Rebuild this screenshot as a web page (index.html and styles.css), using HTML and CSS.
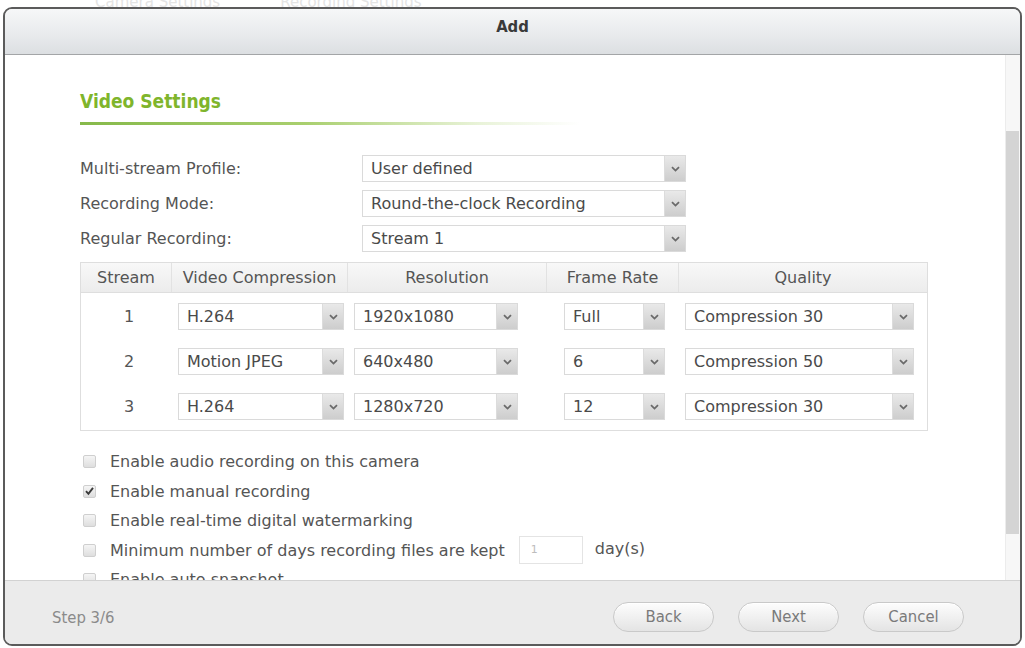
FILE: index.html
```html
<!DOCTYPE html>
<html>
<head>
<meta charset="utf-8">
<title>Add</title>
<link rel="stylesheet" href="styles.css">
</head>
<body>
<div class="page">
  <div class="behind"><span class="behind-a">Camera Settings</span><span class="behind-b">Recording Settings</span></div>
  <div class="dialog">
    <div class="titlebar">Add</div>
    <div class="content">
      <div class="scroll">
        <div class="section-title">Video Settings</div>
        <div class="section-rule"></div>

        <div class="form-rows">
          <div class="form-row">
            <div class="form-label">Multi-stream Profile:</div>
            <div class="select s-wide"><span class="select-text">User defined</span><span class="select-arrow"><svg width="9" height="6" viewBox="0 0 9 6"><path d="M1 1.2 L4.5 4.6 L8 1.2" fill="none" stroke="#6a6a6a" stroke-width="1.8"/></svg></span></div>
          </div>
          <div class="form-row">
            <div class="form-label">Recording Mode:</div>
            <div class="select s-wide"><span class="select-text">Round-the-clock Recording</span><span class="select-arrow"><svg width="9" height="6" viewBox="0 0 9 6"><path d="M1 1.2 L4.5 4.6 L8 1.2" fill="none" stroke="#6a6a6a" stroke-width="1.8"/></svg></span></div>
          </div>
          <div class="form-row">
            <div class="form-label">Regular Recording:</div>
            <div class="select s-wide"><span class="select-text">Stream 1</span><span class="select-arrow"><svg width="9" height="6" viewBox="0 0 9 6"><path d="M1 1.2 L4.5 4.6 L8 1.2" fill="none" stroke="#6a6a6a" stroke-width="1.8"/></svg></span></div>
          </div>
        </div>

        <div class="streams">
          <div class="streams-head">
            <div class="th">Stream</div>
            <div class="th">Video Compression</div>
            <div class="th">Resolution</div>
            <div class="th">Frame Rate</div>
            <div class="th">Quality</div>
          </div>
          <div class="streams-body">
            <div class="srow">
              <div class="td num">1</div>
              <div class="td"><div class="select s-vc"><span class="select-text">H.264</span><span class="select-arrow"><svg width="9" height="6" viewBox="0 0 9 6"><path d="M1 1.2 L4.5 4.6 L8 1.2" fill="none" stroke="#6a6a6a" stroke-width="1.8"/></svg></span></div></div>
              <div class="td"><div class="select s-res"><span class="select-text">1920x1080</span><span class="select-arrow"><svg width="9" height="6" viewBox="0 0 9 6"><path d="M1 1.2 L4.5 4.6 L8 1.2" fill="none" stroke="#6a6a6a" stroke-width="1.8"/></svg></span></div></div>
              <div class="td td-fr"><div class="select s-fr"><span class="select-text">Full</span><span class="select-arrow"><svg width="9" height="6" viewBox="0 0 9 6"><path d="M1 1.2 L4.5 4.6 L8 1.2" fill="none" stroke="#6a6a6a" stroke-width="1.8"/></svg></span></div></div>
              <div class="td"><div class="select s-q"><span class="select-text">Compression 30</span><span class="select-arrow"><svg width="9" height="6" viewBox="0 0 9 6"><path d="M1 1.2 L4.5 4.6 L8 1.2" fill="none" stroke="#6a6a6a" stroke-width="1.8"/></svg></span></div></div>
            </div>
            <div class="srow">
              <div class="td num">2</div>
              <div class="td"><div class="select s-vc"><span class="select-text">Motion JPEG</span><span class="select-arrow"><svg width="9" height="6" viewBox="0 0 9 6"><path d="M1 1.2 L4.5 4.6 L8 1.2" fill="none" stroke="#6a6a6a" stroke-width="1.8"/></svg></span></div></div>
              <div class="td"><div class="select s-res"><span class="select-text">640x480</span><span class="select-arrow"><svg width="9" height="6" viewBox="0 0 9 6"><path d="M1 1.2 L4.5 4.6 L8 1.2" fill="none" stroke="#6a6a6a" stroke-width="1.8"/></svg></span></div></div>
              <div class="td td-fr"><div class="select s-fr"><span class="select-text">6</span><span class="select-arrow"><svg width="9" height="6" viewBox="0 0 9 6"><path d="M1 1.2 L4.5 4.6 L8 1.2" fill="none" stroke="#6a6a6a" stroke-width="1.8"/></svg></span></div></div>
              <div class="td"><div class="select s-q"><span class="select-text">Compression 50</span><span class="select-arrow"><svg width="9" height="6" viewBox="0 0 9 6"><path d="M1 1.2 L4.5 4.6 L8 1.2" fill="none" stroke="#6a6a6a" stroke-width="1.8"/></svg></span></div></div>
            </div>
            <div class="srow">
              <div class="td num">3</div>
              <div class="td"><div class="select s-vc"><span class="select-text">H.264</span><span class="select-arrow"><svg width="9" height="6" viewBox="0 0 9 6"><path d="M1 1.2 L4.5 4.6 L8 1.2" fill="none" stroke="#6a6a6a" stroke-width="1.8"/></svg></span></div></div>
              <div class="td"><div class="select s-res"><span class="select-text">1280x720</span><span class="select-arrow"><svg width="9" height="6" viewBox="0 0 9 6"><path d="M1 1.2 L4.5 4.6 L8 1.2" fill="none" stroke="#6a6a6a" stroke-width="1.8"/></svg></span></div></div>
              <div class="td td-fr"><div class="select s-fr"><span class="select-text">12</span><span class="select-arrow"><svg width="9" height="6" viewBox="0 0 9 6"><path d="M1 1.2 L4.5 4.6 L8 1.2" fill="none" stroke="#6a6a6a" stroke-width="1.8"/></svg></span></div></div>
              <div class="td"><div class="select s-q"><span class="select-text">Compression 30</span><span class="select-arrow"><svg width="9" height="6" viewBox="0 0 9 6"><path d="M1 1.2 L4.5 4.6 L8 1.2" fill="none" stroke="#6a6a6a" stroke-width="1.8"/></svg></span></div></div>
            </div>
          </div>
        </div>

        <div class="options">
          <div class="opt"><span class="cb"></span><span class="opt-label">Enable audio recording on this camera</span></div>
          <div class="opt"><span class="cb cb-checked"><svg width="11" height="10" viewBox="0 0 11 10"><path d="M2 5.2 L4.4 7.8 L9 1.8" fill="none" stroke="#3a3a3a" stroke-width="1.9"/></svg></span><span class="opt-label">Enable manual recording</span></div>
          <div class="opt"><span class="cb"></span><span class="opt-label">Enable real-time digital watermarking</span></div>
          <div class="opt"><span class="cb"></span><span class="opt-label">Minimum number of days recording files are kept</span><span class="days-input">1</span><span class="days-unit">day(s)</span></div>
          <div class="opt"><span class="cb"></span><span class="opt-label">Enable auto snapshot</span></div>
        </div>
      </div>
      <div class="scrollbar"><div class="thumb"></div></div>
    </div>
    <div class="footer">
      <div class="step">Step 3/6</div>
      <div class="buttons">
        <div class="btn">Back</div>
        <div class="btn">Next</div>
        <div class="btn">Cancel</div>
      </div>
    </div>
  </div>
</div>
</body>
</html>
```

FILE: styles.css
```css
* { box-sizing: border-box; }
html, body { margin: 0; padding: 0; background: #ffffff; }
body {
  font-family: "DejaVu Sans", "Liberation Sans", sans-serif;
  font-size: 16px;
  color: #555555;
  width: 1025px;
  height: 648px;
  overflow: hidden;
}
.page {
  padding: 0 3px 0 3px;
}
.behind {
  height: 7px;
  overflow: hidden;
  display: flex;
  gap: 60px;
  padding-left: 92px;
  font-size: 15px;
  line-height: 4px;
  color: #e4e4e4;
}
.dialog {
  width: 1019px;
  height: 639px;
  border: 2px solid #5b5b5b;
  border-radius: 9px;
  overflow: hidden;
  display: flex;
  flex-direction: column;
  background: #fff;
}
.titlebar {
  height: 46px;
  flex: none;
  background: linear-gradient(to bottom, #f6f7f8 0%, #e9ebed 55%, #dcdfe2 100%);
  border-bottom: 1px solid #a3a5a7;
  text-align: center;
  line-height: 36px;
  font-family: "DejaVu Sans Condensed", "DejaVu Sans", sans-serif;
  font-weight: bold;
  font-size: 16.5px;
  color: #3a3a3a;
}
.content {
  flex: 1;
  display: flex;
  min-height: 0;
}
.scroll {
  flex: 1;
  overflow: hidden;
  padding: 35px 0 0 75px;
}
.section-title {
  font-family: "DejaVu Sans Condensed", "DejaVu Sans", sans-serif;
  font-weight: bold;
  font-size: 19px;
  line-height: 22px;
  color: #7fb52c;
}
.section-rule {
  margin-top: 10px;
  width: 500px;
  height: 3px;
  background: linear-gradient(to right, #86b94a 0%, #a9cf6e 45%, rgba(200,225,160,0.4) 80%, rgba(255,255,255,0) 100%);
}
.form-rows {
  margin-top: 30px;
  display: flex;
  flex-direction: column;
  gap: 8px;
}
.form-row {
  display: flex;
  align-items: center;
  height: 27px;
}
.form-label {
  width: 282px;
}
.select {
  height: 27px;
  border: 1px solid #dadada;
  background: #fff;
  display: flex;
  align-items: stretch;
  color: #4a4a4a;
}
.select-text {
  flex: 1;
  padding-left: 8px;
  line-height: 25px;
  white-space: nowrap;
  overflow: hidden;
}
.select-arrow {
  width: 21px;
  flex: none;
  background: linear-gradient(to bottom, #e9e9e9, #cdcdcd);
  border-left: 1px solid #dcdcdc;
  display: flex;
  align-items: center;
  justify-content: center;
}
.s-wide { width: 324px; }
.s-vc { width: 166px; }
.s-res { width: 164px; }
.s-fr { width: 101px; }
.s-q { width: 229px; }

.streams {
  margin-top: 10px;
  width: 848px;
  border: 1px solid #dedede;
}
.streams-head, .srow {
  display: grid;
  grid-template-columns: 90px 176px 199px 132px 249px;
}
.streams-head {
  height: 30px;
  background: linear-gradient(to bottom, #f8f8f8, #ececec);
  border-bottom: 1px solid #dedede;
}
.th {
  text-align: center;
  line-height: 29px;
  color: #555555;
  border-left: 1px solid #e2e2e2;
  white-space: nowrap;
}
.th:first-child { border-left: none; }
.streams-body {
  display: flex;
  flex-direction: column;
  gap: 18px;
  padding: 10px 0 10px 0;
}
.td {
  display: flex;
  align-items: center;
  padding-left: 7px;
  height: 27px;
}
.td.num {
  justify-content: center;
  padding-left: 6px;
}
.td.td-fr { padding-left: 18px; }

.options {
  margin-top: 16px;
  padding-left: 3px;
}
.opt {
  display: flex;
  align-items: center;
  height: 29.5px;
}
.cb {
  width: 13px;
  height: 13px;
  border: 1px solid #cfcfcf;
  border-radius: 2px;
  background: linear-gradient(to bottom, #f5f5f5, #dedede);
  margin-right: 14px;
  flex: none;
  display: flex;
  align-items: center;
  justify-content: center;
}
.cb-checked svg { display: block; }
.opt-label { white-space: nowrap; }
.days-input {
  width: 64px;
  height: 28px;
  margin-left: 14px;
  border: 1px solid #e4e4e4;
  font-size: 11px;
  color: #bdbdbd;
  line-height: 26px;
  padding-left: 11px;
}
.days-unit {
  margin-left: 12px;
  margin-top: -4px;
}
.scrollbar {
  width: 15px;
  flex: none;
  background: #f7f7f7;
  border-left: 1px solid #ececec;
  padding-top: 76px;
}
.thumb {
  width: 13px;
  height: 403px;
  background: #d4d4d4;
}
.footer {
  height: 64px;
  flex: none;
  background: #ebebeb;
  border-top: 1px solid #d2d2d2;
  display: flex;
  align-items: center;
  justify-content: space-between;
  padding: 9px 56px 0 47px;
  font-family: "DejaVu Sans Condensed", "DejaVu Sans", sans-serif;
  font-size: 16.5px;
}
.step { color: #8a8a8a; }
.buttons {
  display: flex;
  gap: 24px;
}
.btn {
  width: 101px;
  height: 30px;
  border-radius: 15px;
  border: 1px solid #c9c9c9;
  background: linear-gradient(to bottom, #fdfdfd, #e4e4e4);
  box-shadow: inset 0 1px 0 #ffffff;
  text-align: center;
  line-height: 28px;
  color: #7a7a7a;
}
```
